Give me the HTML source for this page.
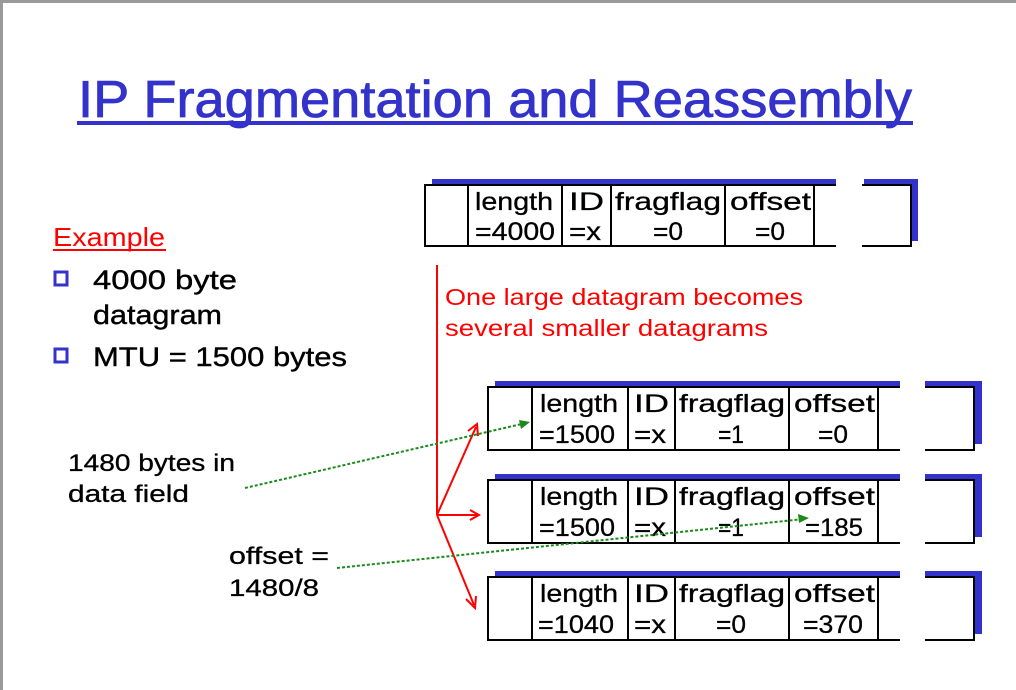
<!DOCTYPE html>
<html><head><meta charset="utf-8"><style>
html,body{margin:0;padding:0;background:#fff;}
body{width:1016px;height:690px;overflow:hidden;}
svg{display:block;font-family:"Liberation Sans",sans-serif;}
</style></head><body>
<svg width="1016" height="690" viewBox="0 0 1016 690" xmlns="http://www.w3.org/2000/svg">
<rect x="0" y="0" width="1016" height="690" fill="#fff"/>
<rect x="0" y="0" width="1016" height="3" fill="#9a9a9a"/>
<rect x="0" y="0" width="3" height="690" fill="#9a9a9a"/>

<!-- Title -->
<text x="78" y="117" font-size="52" fill="#3333cc" stroke="#3333cc" stroke-width="0.8" textLength="834" lengthAdjust="spacingAndGlyphs">IP Fragmentation and Reassembly</text>
<rect x="77" y="121" width="836" height="4" fill="#3333cc"/>

<!-- Left text -->
<text x="53" y="246" font-size="26" fill="#ff0000" textLength="112" lengthAdjust="spacingAndGlyphs">Example</text>
<rect x="53" y="249" width="113" height="2" fill="#ff0000"/>
<rect x="55" y="272" width="12" height="13" fill="#fff" stroke="#3333cc" stroke-width="3"/>
<rect x="55" y="349" width="12" height="13" fill="#fff" stroke="#3333cc" stroke-width="3"/>
<g font-size="27" fill="#000" stroke="#000" stroke-width="0.4">
<text x="93" y="289" textLength="144" lengthAdjust="spacingAndGlyphs">4000 byte</text>
<text x="93" y="324" textLength="129" lengthAdjust="spacingAndGlyphs">datagram</text>
<text x="93" y="366" textLength="254" lengthAdjust="spacingAndGlyphs">MTU = 1500 bytes</text>
</g>
<g font-size="24" fill="#000" stroke="#000" stroke-width="0.3">
<text x="68" y="471" textLength="167" lengthAdjust="spacingAndGlyphs">1480 bytes in</text>
<text x="68" y="502" textLength="121" lengthAdjust="spacingAndGlyphs">data field</text>
<text x="229" y="564" textLength="100" lengthAdjust="spacingAndGlyphs">offset =</text>
<text x="229" y="596" textLength="90" lengthAdjust="spacingAndGlyphs">1480/8</text>
</g>

<!-- Red text -->
<g font-size="23" fill="#ff0000">
<text x="445" y="305" textLength="358" lengthAdjust="spacingAndGlyphs">One large datagram becomes</text>
<text x="445" y="336" textLength="323" lengthAdjust="spacingAndGlyphs">several smaller datagrams</text>
</g>

<!-- Top box -->
<g>
<rect x="432" y="179" width="404" height="6" fill="#3333cc"/>
<rect x="864" y="179" width="54" height="6" fill="#3333cc"/>
<rect x="912" y="179" width="6" height="62" fill="#3333cc"/>
<g stroke="#000" stroke-width="2" fill="none">
<line x1="424" y1="185" x2="836" y2="185"/>
<line x1="862" y1="185" x2="912" y2="185"/>
<line x1="424" y1="246" x2="836" y2="246"/>
<line x1="862" y1="246" x2="912" y2="246"/>
<line x1="425" y1="185" x2="425" y2="246"/>
<line x1="911" y1="185" x2="911" y2="246"/>
<line x1="468" y1="185" x2="468" y2="246"/>
<line x1="562" y1="185" x2="562" y2="246"/>
<line x1="611" y1="185" x2="611" y2="246"/>
<line x1="725" y1="185" x2="725" y2="246"/>
<line x1="814" y1="185" x2="814" y2="246"/>
</g>
<g font-size="25" fill="#000" stroke="#000" stroke-width="0.3">
<text x="475" y="210" textLength="78" lengthAdjust="spacingAndGlyphs">length</text>
<text x="475" y="240" textLength="80" lengthAdjust="spacingAndGlyphs">=4000</text>
<text x="569" y="210" textLength="35" lengthAdjust="spacingAndGlyphs">ID</text>
<text x="569" y="240" textLength="32" lengthAdjust="spacingAndGlyphs">=x</text>
<text x="615" y="210" textLength="106" lengthAdjust="spacingAndGlyphs">fragflag</text>
<text x="653" y="240" textLength="30" lengthAdjust="spacingAndGlyphs">=0</text>
<text x="730" y="210" textLength="81" lengthAdjust="spacingAndGlyphs">offset</text>
<text x="755" y="240" textLength="30" lengthAdjust="spacingAndGlyphs">=0</text>
</g>
</g>

<!-- Fragment boxes -->
<defs>
<g id="frame">
<rect x="495" y="381" width="405" height="6" fill="#3333cc"/>
<rect x="925" y="381" width="57" height="6" fill="#3333cc"/>
<rect x="975" y="381" width="7" height="63" fill="#3333cc"/>
<g stroke="#000" stroke-width="2" fill="none">
<line x1="487" y1="387" x2="900" y2="387"/>
<line x1="925" y1="387" x2="975" y2="387"/>
<line x1="487" y1="450" x2="900" y2="450"/>
<line x1="925" y1="450" x2="975" y2="450"/>
<line x1="488" y1="387" x2="488" y2="450"/>
<line x1="974" y1="387" x2="974" y2="450"/>
<line x1="532" y1="387" x2="532" y2="450"/>
<line x1="628" y1="387" x2="628" y2="450"/>
<line x1="675" y1="387" x2="675" y2="450"/>
<line x1="789" y1="387" x2="789" y2="450"/>
<line x1="878" y1="387" x2="878" y2="450"/>
</g>
<g font-size="25" fill="#000" stroke="#000" stroke-width="0.3">
<text x="540" y="412" textLength="78" lengthAdjust="spacingAndGlyphs">length</text>
<text x="634" y="412" textLength="35" lengthAdjust="spacingAndGlyphs">ID</text>
<text x="679" y="412" textLength="106" lengthAdjust="spacingAndGlyphs">fragflag</text>
<text x="794" y="412" textLength="81" lengthAdjust="spacingAndGlyphs">offset</text>
<text x="634" y="443" textLength="32" lengthAdjust="spacingAndGlyphs">=x</text>
</g>
</g>
</defs>
<use href="#frame"/>
<use href="#frame" transform="translate(0,93)"/>
<use href="#frame" transform="translate(0,190)"/>
<g font-size="25" fill="#000" stroke="#000" stroke-width="0.3">
<text x="539" y="443" textLength="76" lengthAdjust="spacingAndGlyphs">=1500</text>
<text x="718" y="443" textLength="26" lengthAdjust="spacingAndGlyphs">=1</text>
<text x="818" y="443" textLength="30" lengthAdjust="spacingAndGlyphs">=0</text>
<text x="539" y="536" textLength="76" lengthAdjust="spacingAndGlyphs">=1500</text>
<text x="718" y="536" textLength="26" lengthAdjust="spacingAndGlyphs">=1</text>
<text x="805" y="536" textLength="58" lengthAdjust="spacingAndGlyphs">=185</text>
<text x="538" y="633" textLength="76" lengthAdjust="spacingAndGlyphs">=1040</text>
<text x="716" y="633" textLength="30" lengthAdjust="spacingAndGlyphs">=0</text>
<text x="803" y="633" textLength="60" lengthAdjust="spacingAndGlyphs">=370</text>
</g>

<!-- Red arrows -->
<g stroke="#ff0000" stroke-width="2" fill="none">
<line x1="437" y1="265" x2="437" y2="515"/>
<line x1="437" y1="515" x2="476" y2="427"/>
<line x1="437" y1="515" x2="478" y2="515"/>
<line x1="437" y1="515" x2="474" y2="605"/>
<polyline points="468,431 477,424 478,436"/>
<polyline points="470,510 479,515 470,520"/>
<polyline points="466,599 475,608 476,596"/>
</g>

<!-- Green dotted -->
<g stroke="#1a8a1a" stroke-width="2" stroke-dasharray="3,2" fill="none">
<line x1="245" y1="488" x2="526" y2="423"/>
<line x1="337" y1="568" x2="804" y2="519"/>
</g>
<polygon points="530,422 519,420 521,429" fill="#1a8a1a"/>
<polygon points="809,518 798,514 799,523" fill="#1a8a1a"/>
</svg>
</body></html>
